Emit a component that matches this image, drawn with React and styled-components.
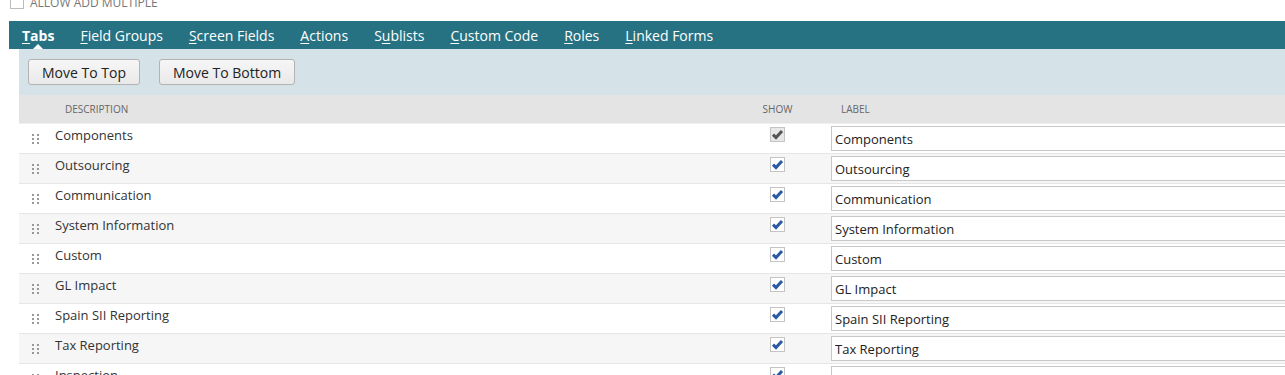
import React from "react";
import styled, { createGlobalStyle } from "styled-components";

const GlobalStyle = createGlobalStyle`
  body {
    margin: 0;
    font-family: "Open Sans", "Liberation Sans", sans-serif;
    background: #fff;
    overflow: hidden;
  }
`;

const tabs = [
  { key: "T", rest: "abs", active: true },
  { key: "F", rest: "ield Groups" },
  { key: "S", rest: "creen Fields" },
  { key: "A", rest: "ctions" },
  { pre: "S", key: "u", rest: "blists" },
  { key: "C", rest: "ustom Code" },
  { key: "R", rest: "oles" },
  { key: "L", rest: "inked Forms" },
];

const rows = [
  { name: "Components", locked: true },
  { name: "Outsourcing" },
  { name: "Communication" },
  { name: "System Information" },
  { name: "Custom" },
  { name: "GL Impact" },
  { name: "Spain SII Reporting" },
  { name: "Tax Reporting" },
  { name: "Inspection", empty: true },
];

function Check({ locked }) {
  return (
    <CheckBox $locked={locked}>
      <svg width="13" height="13" viewBox="0 0 13 13">
        <path
          d="M2 6.6 L5 9.6 L11 3"
          fill="none"
          stroke={locked ? "#555" : "#2a5aa6"}
          strokeWidth="3"
        />
      </svg>
    </CheckBox>
  );
}

function Handle() {
  return (
    <Dots>
      {[0, 1, 2, 3, 4, 5].map((i) => (
        <span key={i} />
      ))}
    </Dots>
  );
}

export default function App() {
  return (
    <Page>
      <GlobalStyle />
      <AllowRow>
        <SmallBox />
        ALLOW ADD MULTIPLE
      </AllowRow>
      <TabBar>
        {tabs.map((t, i) => (
          <Tab key={i} $active={t.active}>
            {t.pre}
            <u>{t.key}</u>
            {t.rest}
          </Tab>
        ))}
      </TabBar>
      <Panel>
        <Toolbar>
          <Button>Move To Top</Button>
          <Button>Move To Bottom</Button>
        </Toolbar>
        <Table>
          <HeadRow>
            <span />
            <HeadCell $pad={10}>Description</HeadCell>
            <HeadCell $center>Show</HeadCell>
            <HeadCell $pad={41}>Label</HeadCell>
          </HeadRow>
          {rows.map((r, i) => (
            <Row key={r.name} $alt={i % 2 === 1}>
              <Handle />
              <Desc>{r.name}</Desc>
              <ShowCell>
                <Check locked={r.locked} />
              </ShowCell>
              <LabelCell>
                <LabelInput readOnly value={r.empty ? "" : r.name} />
              </LabelCell>
            </Row>
          ))}
        </Table>
      </Panel>
    </Page>
  );
}

const Page = styled.div`
  width: 1285px;
  height: 375px;
  overflow: hidden;
`;

const AllowRow = styled.div`
  display: flex;
  align-items: center;
  gap: 6px;
  margin: -9px 0 8px 10px;
  height: 22px;
  font-size: 12px;
  color: #777;
`;

const SmallBox = styled.span`
  width: 14px;
  height: 14px;
  border: 1px solid #bbb;
  background: #fff;
  box-sizing: border-box;
`;

const TabBar = styled.div`
  display: flex;
  align-items: center;
  height: 28px;
  margin-left: 9px;
  background: #277282;
`;

const Tab = styled.div`
  position: relative;
  height: 28px;
  box-sizing: border-box;
  padding: 1px 13px 0;
  font-size: 14px;
  line-height: 28px;
  color: #fff;
  font-weight: ${(p) => (p.$active ? 700 : 400)};
  white-space: nowrap;

  u {
    text-decoration-thickness: 1px;
    text-underline-offset: 2px;
  }

  &::after {
    content: "";
    display: ${(p) => (p.$active ? "block" : "none")};
    position: absolute;
    left: 50%;
    bottom: 0;
    margin-left: -5px;
    border-left: 5px solid transparent;
    border-right: 5px solid transparent;
    border-bottom: 5px solid #fff;
  }
`;

const Panel = styled.div`
  margin-left: 19px;
  background: #d5e3e8;
`;

const Toolbar = styled.div`
  display: flex;
  gap: 19px;
  padding: 10px 9px 10px;
`;

const Button = styled.button`
  height: 26px;
  padding: 0 13px;
  font-family: "Open Sans", "Liberation Sans", sans-serif;
  font-size: 14px;
  color: #222;
  background: linear-gradient(#f6f6f6, #e9e9e9);
  border: 1px solid #b3b3b3;
  border-radius: 3px;
`;

const Table = styled.div`
  background: #fff;
`;

const grid = `
  display: grid;
  grid-template-columns: 36px 700px 45px 1fr;
`;

const HeadRow = styled.div`
  ${grid}
  height: 28px;
  align-items: center;
  background: #e4e4e4;
  border-bottom: 1px solid #f0f0f0;
`;

const HeadCell = styled.div`
  font-size: 10px;
  text-transform: uppercase;
  color: #666;
  padding-left: ${(p) => (p.$pad ? p.$pad + "px" : 0)};
  text-align: ${(p) => (p.$center ? "center" : "left")};
  white-space: nowrap;
`;

const Row = styled.div`
  ${grid}
  height: 29px;
  border-bottom: 1px solid #e6e6e6;
  background: ${(p) => (p.$alt ? "#f6f6f6" : "#fff")};
`;

const Dots = styled.div`
  display: grid;
  grid-template-columns: 2px 2px;
  gap: 2px 3px;
  align-content: center;
  padding-left: 13px;

  span {
    width: 2px;
    height: 2px;
    background: #999;
  }
`;

const Desc = styled.div`
  font-size: 13px;
  color: #333;
  padding-top: 2px;
  line-height: 18px;
`;

const ShowCell = styled.div`
  display: flex;
  justify-content: center;
  padding-top: 3px;
`;

const CheckBox = styled.span`
  display: flex;
  align-items: center;
  justify-content: center;
  width: 15px;
  height: 15px;
  box-sizing: border-box;
  border: 1px solid #c4c4c4;
  background: ${(p) => (p.$locked ? "#e8e8e8" : "#fff")};
`;

const LabelCell = styled.div`
  padding: 2px 0 0 31px;
`;

const LabelInput = styled.input`
  width: 480px;
  height: 25px;
  box-sizing: border-box;
  border: 1px solid #c8c8c8;
  padding: 0 3px;
  font-family: "Open Sans", "Liberation Sans", sans-serif;
  font-size: 13px;
  color: #222;
  background: #fff;
  outline: none;
`;
